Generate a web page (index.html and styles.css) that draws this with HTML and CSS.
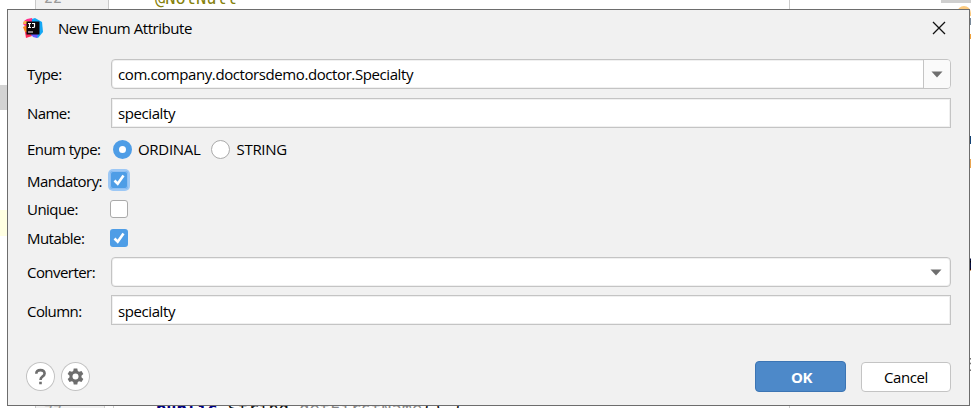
FILE: index.html
```html
<!DOCTYPE html>
<html lang="en">
<head>
<meta charset="utf-8">
<title>New Enum Attribute</title>
<link rel="stylesheet" href="styles.css">
</head>
<body>
<div class="editor" aria-hidden="true">
  <div class="gutter"><span class="line-no top">22</span><span class="line-no bottom">77</span></div>
  <div class="bottom-fold"></div>
  <div class="margin-line"></div>
  <div class="left-mark grey"></div><div class="left-mark yellow"></div>
  <code class="annotation">@NotNull</code>
  <code class="method"><b>public</b> String <i>getFirstName</i>() {</code>
  <div class="scroll-mark"></div><div class="badge"></div>
  <div class="edge e1"></div><div class="edge e2"></div><div class="edge e3"></div><div class="edge e4"></div>
  <code class="edge-char">t</code><code class="edge-char lower">E</code>
</div>
<main class="dialog">
  <header class="titlebar">
    <svg class="logo" width="20" height="20" viewBox="0 0 20 20">
      <path fill="#ff318c" d="M4 1 9 0 11 6 6 12 0 6 1 3z"/>
      <path fill="#fc801d" d="M0 9 4 7 7 14 2 14z"/>
      <path fill="#fe2857" d="M2 14 8 14 9 18 3 20z"/>
      <path fill="#ffb04a" d="M1 3 5 3 5 6 0 6z"/>
      <path fill="#15a8f5" d="M9 1 12 0 19 4 20 14 15 20 8 17z"/>
      <path fill="#6b57ff" d="M8 16 15 16 14 20 10 19z"/>
      <path fill="#0b0508" d="M3.500 3.500h13v13h-13z"/>
      <path stroke="#fff" stroke-width="1.200" fill="none" d="M5 5.500h3M6.500 5.500v4M5 9.500h3M9 5.500h2.500v3q0 1-1 1H9M5 14h5"/>
    </svg>
    <h1>New Enum Attribute</h1>
    <svg class="close" width="14" height="14" viewBox="0 0 14 14"><path d="M1 1 13 13M13 1 1 13" stroke="#111" stroke-width="1.300"/></svg>
  </header>
  <form class="form">
    <div class="row tall"><span class="label">Type:</span>
      <div class="field combo"><span class="value">com.company.doctorsdemo.doctor.Specialty</span><span class="arrow split"><svg width="12" height="7"><path d="M.5.500h11L6 6.500z"/></svg></span></div></div>
    <div class="row tall name-row"><span class="label">Name:</span><div class="field"><span class="value">specialty</span></div></div>
    <div class="row radios"><span class="label">Enum type:</span>
      <span class="radio on"></span><span class="option ordinal">ORDINAL</span><span class="radio"></span><span class="option">STRING</span></div>
    <div class="row check"><span class="label mandatory">Mandatory:</span><span class="box on focus"><svg width="18" height="18" viewBox="0 0 18 18"><path d="M4.500 9.500 7.700 12.700 13.500 4.500"/></svg></span></div>
    <div class="row check"><span class="label">Unique:</span><span class="box"></span></div>
    <div class="row check"><span class="label">Mutable:</span><span class="box on"><svg width="18" height="18" viewBox="0 0 18 18"><path d="M4.500 9.500 7.700 12.700 13.500 4.500"/></svg></span></div>
    <div class="row tall converter-row"><span class="label">Converter:</span><div class="field combo"><span class="value"></span><span class="arrow"><svg width="12" height="7"><path d="M.5.500h11L6 6.500z"/></svg></span></div></div>
    <div class="row tall column-row"><span class="label column">Column:</span><div class="field"><span class="value column">specialty</span></div></div>
  </form>
  <footer class="footer">
    <span class="round"><svg width="29" height="29" viewBox="0 0 29 29"><path d="M10.300 11.700Q10.300 8.100 14.400 8.100T18.600 11.600Q18.600 13.300 16.400 14.700 14.500 15.900 14.500 18" fill="none" stroke="#6e6e6e" stroke-width="2.600"/><path fill="#6e6e6e" d="M13.200 19.700h2.600v2.600h-2.600z"/></svg></span>
    <span class="round"><svg width="29" height="29" viewBox="0 0 29 29"><g fill="#6e6e6e"><circle cx="14.500" cy="14.500" r="6"/><path id="tooth" d="M12.700 6.500h3.600l.7 4h-5z"/><use href="#tooth" transform="rotate(60 14.500 14.500)"/><use href="#tooth" transform="rotate(120 14.500 14.500)"/><use href="#tooth" transform="rotate(180 14.500 14.500)"/><use href="#tooth" transform="rotate(240 14.500 14.500)"/><use href="#tooth" transform="rotate(300 14.500 14.500)"/></g><circle cx="14.500" cy="14.500" r="3" fill="#fff"/></svg></span>
    <span class="button ok">OK</span><span class="button cancel">Cancel</span>
  </footer>
</main>
</body>
</html>
```
FILE: styles.css
```css
* { box-sizing: border-box; }
body { margin: 0; width: 971px; height: 408px; overflow: hidden; background: #fff; color: #000; font: 15px/20px "Open Sans", "Noto Sans", sans-serif; letter-spacing: -.41px; position: relative; padding: 9px 0 0 7px; }
svg { display: block; }

/* Code editor seen around the dialog */
.editor { position: absolute; inset: 0; overflow: hidden; letter-spacing: 0; }
.editor > * { position: absolute; }
.editor code { font: 17px/20px "DejaVu Sans Mono", monospace; white-space: pre; }
.gutter { left: 35px; top: 0; width: 74px; height: 408px; background: #f1f1f1; border: solid #c9c9c9; border-width: 0 1px; overflow: hidden; }
.line-no { position: absolute; left: 8px; font: 15px/20px "DejaVu Sans Mono", monospace; color: #999; }
.line-no.top { top: -12px; }
.line-no.bottom { top: 402px; }
.bottom-fold { left: 104px; top: 406px; width: 10px; height: 2px; background: #fff; border: solid #d0d0d0; border-width: 0 1px; }
.margin-line { left: 789px; top: 0; width: 1px; height: 408px; background: #ccc; }
.left-mark { left: 0; width: 7px; }
.grey { top: 85px; height: 25px; background: #d3d3d3; }
.yellow { top: 210px; height: 26px; background: #ffffe2; }
.editor .annotation { left: 155px; top: -12px; color: #85810c; }
.editor .method { left: 156px; top: 399px; color: #111; }
.method b { color: #000080; }
.method i { color: #888; font-style: normal; }
.scroll-mark { left: 941px; top: 0; width: 30px; height: 3px; background: #cfcfcf; }
.badge { left: 957px; top: 6px; width: 14px; height: 10px; border-radius: 7px 7px 0 0; background: #fbc97e; }
.edge { left: 970px; width: 1px; }
.e1 { top: 18px; height: 7px; background: #7a8b9b; }
.e2 { top: 34px; height: 5px; background: #f0a23d; }
.e3 { top: 136px; height: 8px; background: #164577; }
.e4 { top: 159px; height: 9px; background: #eaa550; }
.editor .edge-char { left: 966px; top: 255px; }
.editor .edge-char.lower { top: 355px; color: #777; }

/* Dialog */
.dialog { position: relative; width: 963px; height: 397px; background: #f1f1f1; border: 1px solid #6d6d6d; display: flex; flex-direction: column; padding: 0 18px 0 19px; }
.titlebar { height: 49px; padding: 8px 4px 0 0; margin-left: -4px; display: flex; align-items: flex-start; }
.logo { margin-right: 15px; }
h1 { margin: 0; font-size: 15px; line-height: 20px; font-weight: 400; letter-spacing: -.45px; white-space: nowrap; }
.close { margin: 3px 1px 0 auto; }
.form { display: flex; flex-direction: column; }
.row { display: flex; align-items: center; }
.tall { height: 30px; }
.name-row { margin-top: 9px; }
.label { width: 84px; white-space: nowrap; letter-spacing: -.55px; }
.mandatory, .column { padding-top: 2px; }
.field { flex: 1; height: 30px; margin: 0 .5px 0 -.5px; background: #fff; border: 1px solid #c4c4c4; box-shadow: inset 0 0 0 1px #f0f0f0; display: flex; align-items: center; }
.value { padding-left: 6.5px; white-space: nowrap; }
.value.column { padding-top: 1px; }
.combo { border-radius: 4px; overflow: hidden; }
.arrow { margin-left: auto; width: 27px; height: 28px; display: flex; align-items: center; justify-content: center; fill: #6e6e6e; }
.split { background: #fafafa; border-left: 1px solid #c4c4c4; }
.radios { height: 30px; margin: 6px 0 1px; }
.radio { width: 19px; height: 19px; border: 1px solid #aaa; border-radius: 50%; background: #fff; margin-left: 2px; }
.radio.on { border: 6px solid #4e9de6; }
.option { margin-left: 6.5px; white-space: nowrap; letter-spacing: -.3px; }
.ordinal { width: 71px; margin-left: 6px; }
.check { height: 29px; }
.box { width: 18px; height: 18px; margin-left: -.6px; border: 1px solid #aaa; border-radius: 3px; background: #fff; }
.box.on { background: #4e9de6; border: 0; }
.box.focus { box-shadow: 0 0 0 2px #9dc8f5, inset 0 0 0 1px #8fbff2; }
.box path { fill: none; stroke: #fff; stroke-width: 2.6; }
.converter-row { margin-top: 5px; }
.column-row { margin-top: 8px; }
.footer { margin-top: 36px; margin-left: -1px; height: 31px; display: flex; align-items: center; }
.round { width: 29px; height: 29px; border-radius: 50%; background: #fff; box-shadow: inset 0 0 0 1px #c2c2c2; margin-right: 6px; }
.button { height: 30px; border: 1px solid #c4c4c4; border-radius: 4px; background: #fff; display: flex; align-items: center; justify-content: center; }
.ok { margin-left: auto; width: 91px; height: 31px; padding: 1px 0 0 2px; color: #fff; font-weight: 700; background: #4d89c9; border-color: #3c75b4; }
.cancel { margin-left: 15px; width: 90px; }
```
